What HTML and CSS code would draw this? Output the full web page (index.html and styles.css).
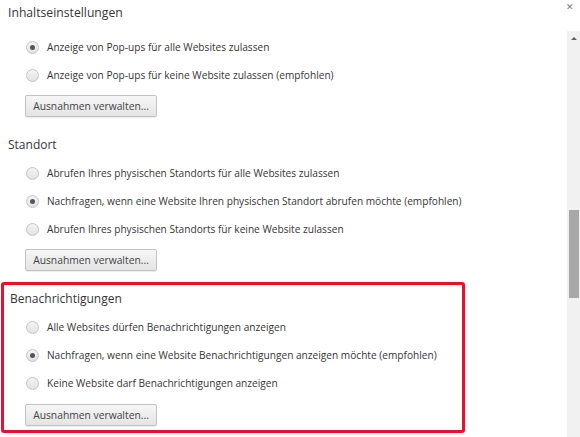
FILE: index.html
```html
<!DOCTYPE html>
<html lang="de">

<head>
    <meta charset="utf-8">
    <title>Inhaltseinstellungen</title>
    <link rel="stylesheet" href="styles.css">
</head>

<body>
    <div class="dialog">
        <div class="dialog-header">
            <h1 class="dialog-title">Inhaltseinstellungen</h1>
            <span class="close">&#x2715;</span>
        </div>
        <div class="dialog-body">
            <div class="content">
                <section class="group">
                    <label class="option"><span class="radio checked"></span>Anzeige von Pop-ups für alle Websites zulassen</label>
                    <label class="option"><span class="radio"></span>Anzeige von Pop-ups für keine Website zulassen (empfohlen)</label>
                    <button class="btn">Ausnahmen verwalten...</button>
                </section>

                <section class="group">
                    <h2 class="group-title">Standort</h2>
                    <label class="option"><span class="radio"></span>Abrufen Ihres physischen Standorts für alle Websites zulassen</label>
                    <label class="option"><span class="radio checked"></span>Nachfragen, wenn eine Website Ihren physischen Standort abrufen möchte (empfohlen)</label>
                    <label class="option"><span class="radio"></span>Abrufen Ihres physischen Standorts für keine Website zulassen</label>
                    <button class="btn">Ausnahmen verwalten...</button>
                </section>

                <section class="group highlight">
                    <h2 class="group-title">Benachrichtigungen</h2>
                    <label class="option"><span class="radio"></span>Alle Websites dürfen Benachrichtigungen anzeigen</label>
                    <label class="option"><span class="radio checked"></span>Nachfragen, wenn eine Website Benachrichtigungen anzeigen möchte (empfohlen)</label>
                    <label class="option"><span class="radio"></span>Keine Website darf Benachrichtigungen anzeigen</label>
                    <button class="btn">Ausnahmen verwalten...</button>
                </section>
            </div>
            <div class="scrollbar">
                <span class="scroll-arrow"></span>
                <span class="scroll-thumb"></span>
            </div>
        </div>
    </div>
</body>

</html>
```

FILE: styles.css
```css
:root {
    --text: #363636;
    --muted: #7a7a7a;
    --track: #f1f1f1;
    --thumb: #a8a8a8;
    --highlight: #e8102f;
}

body {
    margin: 0;
    font-family: 'Open Sans', 'Liberation Sans', sans-serif;
    color: var(--text);
    background: #fff;
    overflow: hidden;
}

.dialog {
    width: 580px;
    height: 437px;
    display: flex;
    flex-direction: column;
}

.dialog-header {
    height: 31px;
    display: flex;
    justify-content: space-between;
    align-items: flex-start;
    padding: 0 8px;
    flex-shrink: 0;
}

.dialog-title {
    margin: 0;
    font-size: 12.2px;
    font-weight: normal;
    line-height: 26px;
}

.close {
    font-size: 9px;
    line-height: 14px;
    color: #777;
    margin-right: -2px;
}

.dialog-body {
    flex: 1;
    display: flex;
    min-height: 0;
}

.content {
    flex: 1;
    padding-left: 8px;
}

.group {
    display: flex;
    flex-direction: column;
    align-items: flex-start;
}

.group + .group {
    margin-top: 14px;
}

.group-title {
    margin: 0;
    height: 28px;
    font-size: 12px;
    font-weight: normal;
    line-height: 28px;
}

.option {
    height: 28px;
    margin-left: 18px;
    display: flex;
    align-items: center;
    gap: 8px;
    font-size: 10.15px;
}

.group:first-child .option:first-child {
    margin-top: 2px;
}

.radio {
    width: 11px;
    height: 11px;
    border-radius: 50%;
    border: 1px solid #c4c4c4;
    background: linear-gradient(#f4f4f4, #e2e2e2);
    display: flex;
    align-items: center;
    justify-content: center;
}

.radio.checked::after {
    content: "";
    width: 5px;
    height: 5px;
    border-radius: 50%;
    background: #555;
}

.btn {
    margin: 6px 0 0 17px;
    width: 132px;
    height: 22px;
    padding: 0;
    border: 1px solid #c3c3c3;
    border-radius: 2px;
    background: linear-gradient(#f6f6f6, #e4e4e4);
    box-shadow: 0 1px 1px rgba(0, 0, 0, 0.08);
    font-family: inherit;
    font-size: 10.3px;
    color: #444;
}

.group.highlight {
    margin-top: 11px;
    margin-left: -7px;
    width: 454px;
    border: 3px solid var(--highlight);
    border-radius: 3px;
    padding: 0 0 4px 4px;
}

.highlight .group-title {
    padding-left: 2px;
}

.highlight .btn {
    margin-top: 7px;
}

.scrollbar {
    width: 13px;
    background: var(--track);
    display: flex;
    flex-direction: column;
    align-items: center;
}

.scroll-arrow {
    margin-top: 6px;
    width: 0;
    height: 0;
    border-left: 3px solid transparent;
    border-right: 3px solid transparent;
    border-bottom: 3px solid #606060;
}

.scroll-thumb {
    margin-top: 170px;
    width: 10px;
    height: 88px;
    background: var(--thumb);
}
```
